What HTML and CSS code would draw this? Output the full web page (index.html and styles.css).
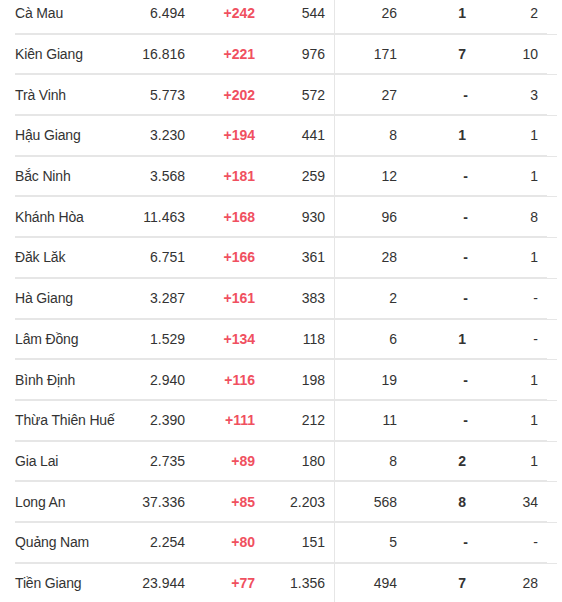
FILE: index.html
```html
<!DOCTYPE html>
<html lang="vi">
<head>
<meta charset="utf-8">
<title>Bảng số liệu</title>
<link rel="stylesheet" href="styles.css">
</head>
<body>
<div class="table">
  <div class="row"><span class="c name">Cà Mau</span><span class="c num">6.494</span><span class="c inc">+242</span><span class="c num sep">544</span><span class="c num">26</span><span class="c b">1</span><span class="c last">2</span></div>
  <div class="row"><span class="c name">Kiên Giang</span><span class="c num">16.816</span><span class="c inc">+221</span><span class="c num sep">976</span><span class="c num">171</span><span class="c b">7</span><span class="c last">10</span></div>
  <div class="row"><span class="c name">Trà Vinh</span><span class="c num">5.773</span><span class="c inc">+202</span><span class="c num sep">572</span><span class="c num">27</span><span class="c b dash">-</span><span class="c last">3</span></div>
  <div class="row"><span class="c name">Hậu Giang</span><span class="c num">3.230</span><span class="c inc">+194</span><span class="c num sep">441</span><span class="c num">8</span><span class="c b">1</span><span class="c last">1</span></div>
  <div class="row"><span class="c name">Bắc Ninh</span><span class="c num">3.568</span><span class="c inc">+181</span><span class="c num sep">259</span><span class="c num">12</span><span class="c b dash">-</span><span class="c last">1</span></div>
  <div class="row"><span class="c name">Khánh Hòa</span><span class="c num">11.463</span><span class="c inc">+168</span><span class="c num sep">930</span><span class="c num">96</span><span class="c b dash">-</span><span class="c last">8</span></div>
  <div class="row"><span class="c name">Đăk Lăk</span><span class="c num">6.751</span><span class="c inc">+166</span><span class="c num sep">361</span><span class="c num">28</span><span class="c b dash">-</span><span class="c last">1</span></div>
  <div class="row"><span class="c name">Hà Giang</span><span class="c num">3.287</span><span class="c inc">+161</span><span class="c num sep">383</span><span class="c num">2</span><span class="c b dash">-</span><span class="c last">-</span></div>
  <div class="row"><span class="c name">Lâm Đồng</span><span class="c num">1.529</span><span class="c inc">+134</span><span class="c num sep">118</span><span class="c num">6</span><span class="c b">1</span><span class="c last">-</span></div>
  <div class="row"><span class="c name">Bình Định</span><span class="c num">2.940</span><span class="c inc">+116</span><span class="c num sep">198</span><span class="c num">19</span><span class="c b dash">-</span><span class="c last">1</span></div>
  <div class="row"><span class="c name">Thừa Thiên Huế</span><span class="c num">2.390</span><span class="c inc">+111</span><span class="c num sep">212</span><span class="c num">11</span><span class="c b dash">-</span><span class="c last">1</span></div>
  <div class="row"><span class="c name">Gia Lai</span><span class="c num">2.735</span><span class="c inc">+89</span><span class="c num sep">180</span><span class="c num">8</span><span class="c b">2</span><span class="c last">1</span></div>
  <div class="row"><span class="c name">Long An</span><span class="c num">37.336</span><span class="c inc">+85</span><span class="c num sep">2.203</span><span class="c num">568</span><span class="c b">8</span><span class="c last">34</span></div>
  <div class="row"><span class="c name">Quảng Nam</span><span class="c num">2.254</span><span class="c inc">+80</span><span class="c num sep">151</span><span class="c num">5</span><span class="c b dash">-</span><span class="c last">-</span></div>
  <div class="row"><span class="c name">Tiền Giang</span><span class="c num">23.944</span><span class="c inc">+77</span><span class="c num sep">1.356</span><span class="c num">494</span><span class="c b">7</span><span class="c last">28</span></div>
</div>
</body>
</html>
```

FILE: styles.css
```css
html, body {
  margin: 0;
  padding: 0;
  background: #ffffff;
  overflow: hidden;
}

body {
  font-family: "Liberation Sans", Arial, sans-serif;
  font-size: 14px;
  color: #333333;
}

.table {
  margin-top: -6px;
  margin-left: 15px;
  width: 532px;
}

.row {
  position: relative;
  box-sizing: border-box;
  height: 40.69px;
  display: grid;
  grid-template-columns: 90px 80px 71px 79px 62px 71px 79px;
  align-items: stretch;
  border-bottom: 2px solid #e6e6e6;
}

.row::after {
  content: "";
  position: absolute;
  right: -10px;
  bottom: -2px;
  width: 10px;
  height: 1px;
  background: #e6e6e6;
}

.c {
  display: flex;
  align-items: center;
  justify-content: flex-end;
  white-space: nowrap;
}

.name {
  justify-content: flex-start;
  letter-spacing: -0.15px;
}

.inc {
  font-weight: bold;
  color: #f0505f;
  padding-right: 1px;
}

.sep {
  padding-right: 9px;
  border-right: 1px solid #e6e6e6;
}

.b {
  font-weight: bold;
  padding-right: 2px;
}

.b.dash {
  padding-right: 0;
}

.last {
  padding-right: 9px;
}
```
